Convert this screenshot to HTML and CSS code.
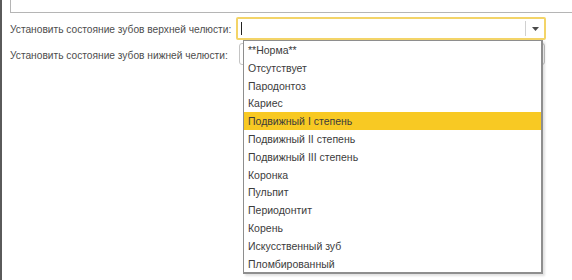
FILE: index.html
```html
<!DOCTYPE html>
<html lang="ru">
<head>
<meta charset="utf-8">
<link rel="stylesheet" href="styles.css">
</head>
<body>
<div class="window">
  <div class="memo"></div>
  <div class="row row-first">
    <span class="label">Установить состояние зубов верхней челюсти:</span>
    <div class="field field-focus">
      <span class="caret"></span>
      <span class="sep"></span>
      <span class="drop"><svg width="7" height="4" viewBox="0 0 7 4"><path d="M0 0H7L3.5 4Z" fill="#4a4a4a"/></svg></span>
      <ul class="list">
        <li>**Норма**</li>
        <li>Отсутствует</li>
        <li>Пародонтоз</li>
        <li>Кариес</li>
        <li class="active">Подвижный I степень</li>
        <li>Подвижный II степень</li>
        <li>Подвижный III степень</li>
        <li>Коронка</li>
        <li>Пульпит</li>
        <li>Периодонтит</li>
        <li>Корень</li>
        <li>Искусственный зуб</li>
        <li>Пломбированный</li>
      </ul>
    </div>
  </div>
  <div class="row row-second">
    <span class="label">Установить состояние зубов нижней челюсти:</span>
    <div class="field field-plain"></div>
  </div>
</div>
</body>
</html>
```

FILE: styles.css
```css
* { box-sizing: border-box; }
html, body { margin: 0; padding: 0; background: #fff; }
body {
  width: 572px;
  height: 280px;
  overflow: hidden;
  font-family: "Liberation Sans", Arial, sans-serif;
  font-size: 10.5px;
}
.window {
  height: 280px;
  border-left: 2px solid #5a5a5a;
  padding-left: 8px;
  display: flex;
  flex-direction: column;
}
.memo {
  height: 13px;
  border-left: 1px solid #b5b5b5;
  border-bottom: 1px solid #b5b5b5;
  margin-right: -2px;
}
.row {
  display: flex;
  align-items: center;
  position: relative;
}
.row-first { margin-top: 4px; height: 23px; z-index: 2; }
.row-second { margin-top: 3px; height: 22px; z-index: 1; }
.label {
  color: #4d4d4d;
  width: 226px;
  font-size: 10.2px;
  white-space: nowrap;
  padding-top: 2px;
}
.field {
  position: relative;
  background: #fff;
}
.field-focus {
  width: 310px;
  height: 23px;
  border: 2px solid #f3d468;
  border-radius: 2px;
}
.field-plain {
  margin-left: 3px;
  width: 306px;
  height: 22px;
  border: 1px solid #c4c4c4;
  border-radius: 3px;
}
.caret {
  position: absolute;
  left: 3px;
  top: 3px;
  width: 1px;
  height: 13px;
  background: #222;
}
.sep {
  position: absolute;
  left: 287px;
  top: 2px;
  width: 1px;
  height: 15px;
  background: #d0d0d0;
}
.drop {
  position: absolute;
  left: 294px;
  top: 8px;
  display: flex;
}
.list {
  position: absolute;
  left: 5px;
  top: 21px;
  width: 300px;
  margin: 0;
  padding: 0;
  list-style: none;
  background: #fff;
  border: 1px solid #8e8e8e;
  border-right-width: 2px;
  border-bottom-width: 2px;
  box-shadow: 2px 2px 2px rgba(0, 0, 0, 0.12);
}
.list li {
  height: 17.8px;
  line-height: 18.8px;
  padding-left: 4px;
  color: #3c3c3c;
  white-space: nowrap;
}
.list li.active {
  background: #f8c923;
}
```
